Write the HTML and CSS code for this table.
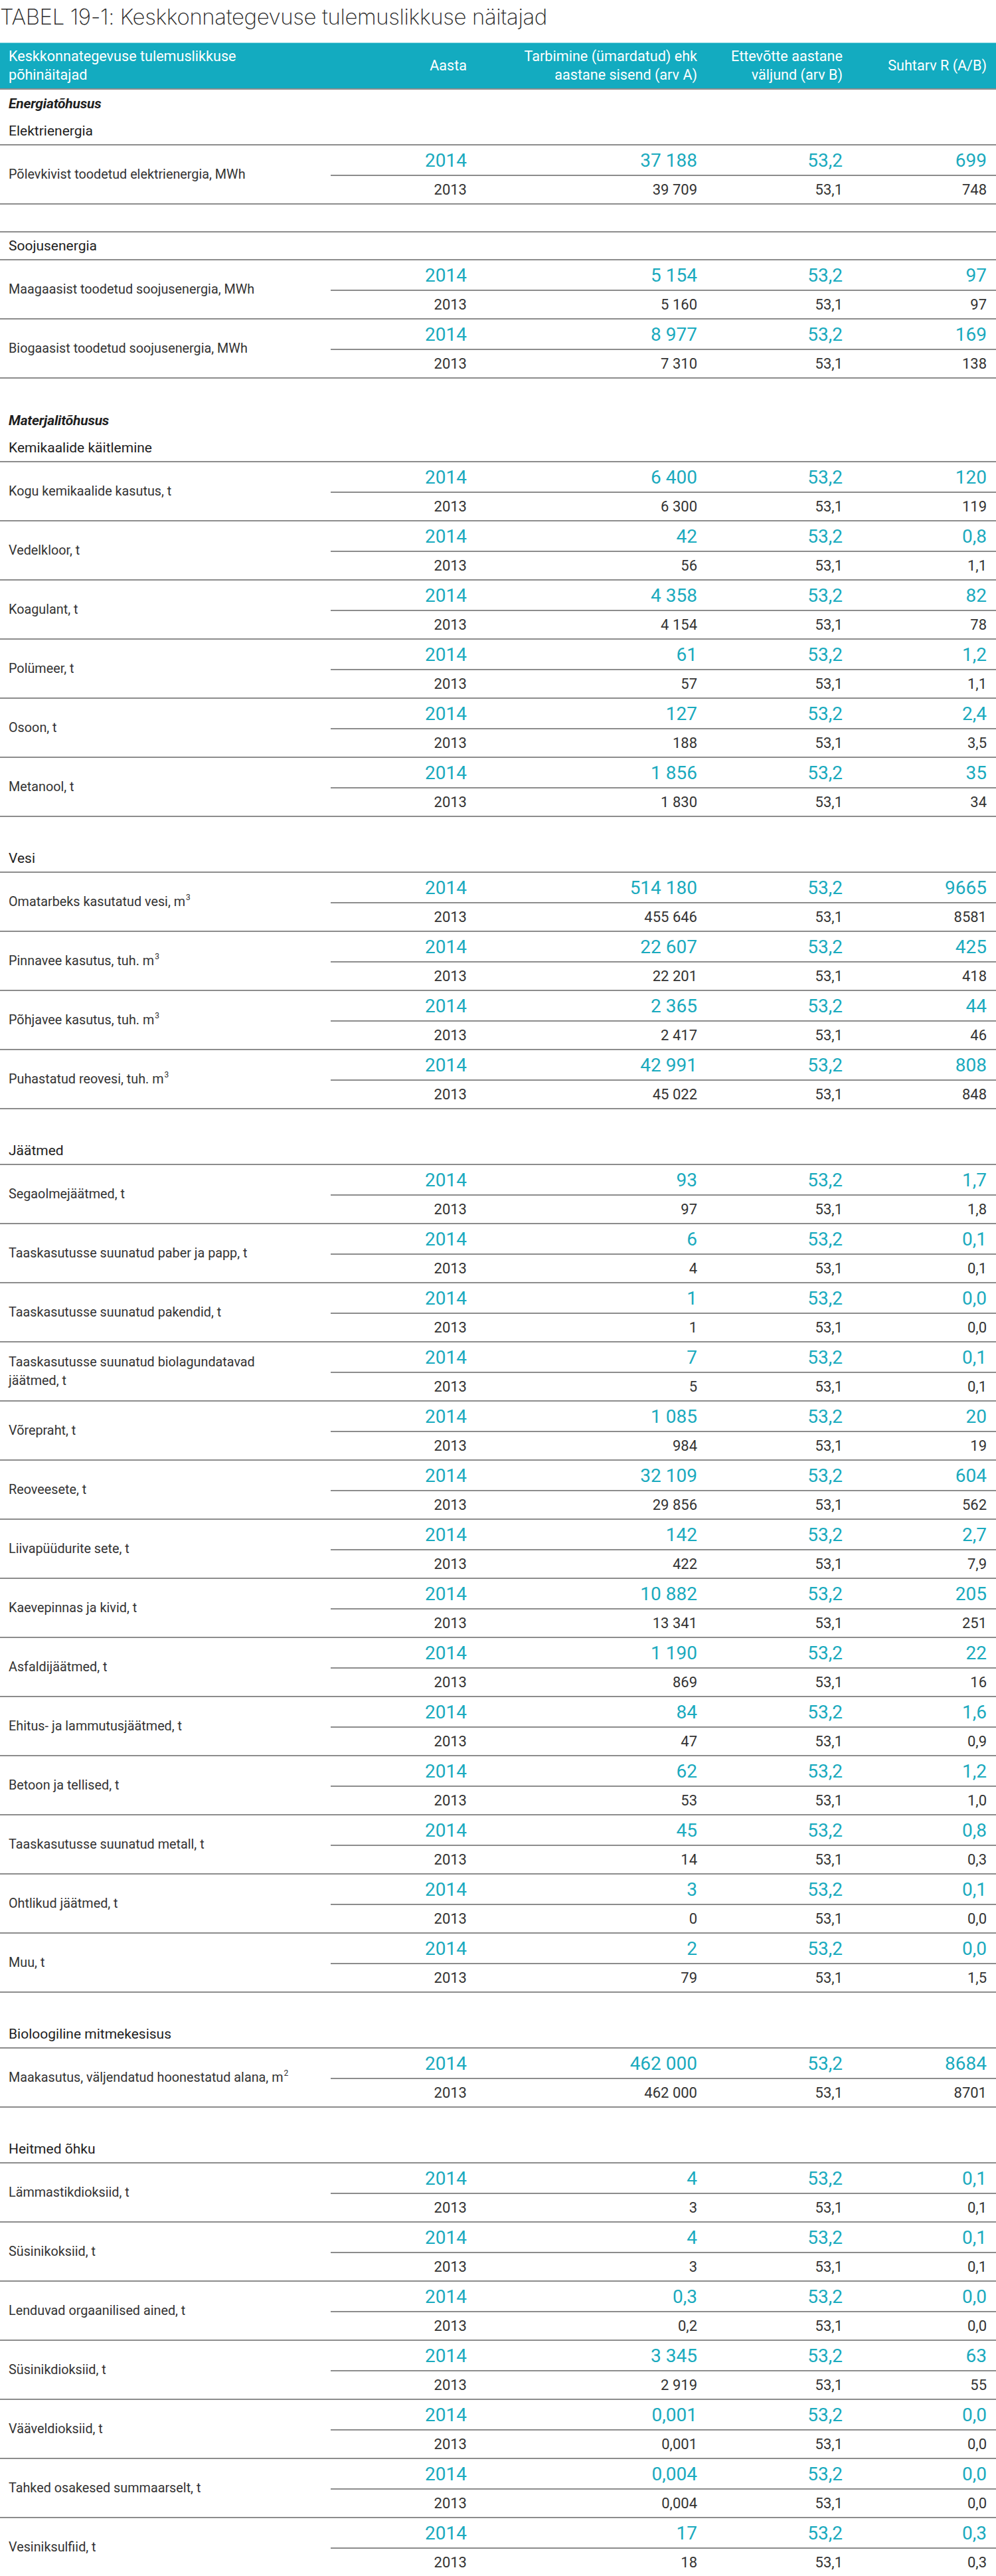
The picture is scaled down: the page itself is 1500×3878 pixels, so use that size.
FILE: index.html
```html
<!DOCTYPE html>
<html lang="et">
<head>
<meta charset="utf-8">
<title>TABEL 19-1</title>
<link rel="stylesheet" href="styles.css">
</head>
<body>
<h1 class="title">TABEL 19-1: Keskkonnategevuse tulemuslikkuse näitajad</h1>
<div class="table">
  <div class="thead">
    <div class="h1">Keskkonnategevuse tulemuslikkuse<br>põhinäitajad</div>
    <div class="hy">Aasta</div>
    <div>Tarbimine (ümardatud) ehk<br>aastane sisend (arv A)</div>
    <div>Ettevõtte aastane<br>väljund (arv B)</div>
    <div class="hl">Suhtarv R (A/B)</div>
  </div>

  <div class="row sec">Energiatõhusus</div>
  <div class="row line">Elektrienergia</div>
  <div class="ind">
    <div class="lbl">Põlevkivist toodetud elektrienergia, MWh</div>
    <div class="n y">2014</div><div class="n">37 188</div><div class="n">53,2</div><div class="n l">699</div>
    <div class="o y">2013</div><div class="o">39 709</div><div class="o">53,1</div><div class="o l">748</div>
  </div>
  <div class="row line"></div>
  <div class="row line">Soojusenergia</div>
  <div class="ind">
    <div class="lbl">Maagaasist toodetud soojusenergia, MWh</div>
    <div class="n y">2014</div><div class="n">5 154</div><div class="n">53,2</div><div class="n l">97</div>
    <div class="o y">2013</div><div class="o">5 160</div><div class="o">53,1</div><div class="o l">97</div>
  </div>
  <div class="ind">
    <div class="lbl">Biogaasist toodetud soojusenergia, MWh</div>
    <div class="n y">2014</div><div class="n">8 977</div><div class="n">53,2</div><div class="n l">169</div>
    <div class="o y">2013</div><div class="o">7 310</div><div class="o">53,1</div><div class="o l">138</div>
  </div>
  <div class="row"></div>

  <div class="row sec">Materjalitõhusus</div>
  <div class="row line">Kemikaalide käitlemine</div>
  <div class="ind">
    <div class="lbl">Kogu kemikaalide kasutus, t</div>
    <div class="n y">2014</div><div class="n">6 400</div><div class="n">53,2</div><div class="n l">120</div>
    <div class="o y">2013</div><div class="o">6 300</div><div class="o">53,1</div><div class="o l">119</div>
  </div>
  <div class="ind">
    <div class="lbl">Vedelkloor, t</div>
    <div class="n y">2014</div><div class="n">42</div><div class="n">53,2</div><div class="n l">0,8</div>
    <div class="o y">2013</div><div class="o">56</div><div class="o">53,1</div><div class="o l">1,1</div>
  </div>
  <div class="ind">
    <div class="lbl">Koagulant, t</div>
    <div class="n y">2014</div><div class="n">4 358</div><div class="n">53,2</div><div class="n l">82</div>
    <div class="o y">2013</div><div class="o">4 154</div><div class="o">53,1</div><div class="o l">78</div>
  </div>
  <div class="ind">
    <div class="lbl">Polümeer, t</div>
    <div class="n y">2014</div><div class="n">61</div><div class="n">53,2</div><div class="n l">1,2</div>
    <div class="o y">2013</div><div class="o">57</div><div class="o">53,1</div><div class="o l">1,1</div>
  </div>
  <div class="ind">
    <div class="lbl">Osoon, t</div>
    <div class="n y">2014</div><div class="n">127</div><div class="n">53,2</div><div class="n l">2,4</div>
    <div class="o y">2013</div><div class="o">188</div><div class="o">53,1</div><div class="o l">3,5</div>
  </div>
  <div class="ind">
    <div class="lbl">Metanool, t</div>
    <div class="n y">2014</div><div class="n">1 856</div><div class="n">53,2</div><div class="n l">35</div>
    <div class="o y">2013</div><div class="o">1 830</div><div class="o">53,1</div><div class="o l">34</div>
  </div>
  <div class="row"></div>

  <div class="row line">Vesi</div>
  <div class="ind">
    <div class="lbl"><span>Omatarbeks kasutatud vesi, m<sup>3</sup></span></div>
    <div class="n y">2014</div><div class="n">514 180</div><div class="n">53,2</div><div class="n l">9665</div>
    <div class="o y">2013</div><div class="o">455 646</div><div class="o">53,1</div><div class="o l">8581</div>
  </div>
  <div class="ind">
    <div class="lbl"><span>Pinnavee kasutus, tuh. m<sup>3</sup></span></div>
    <div class="n y">2014</div><div class="n">22 607</div><div class="n">53,2</div><div class="n l">425</div>
    <div class="o y">2013</div><div class="o">22 201</div><div class="o">53,1</div><div class="o l">418</div>
  </div>
  <div class="ind">
    <div class="lbl"><span>Põhjavee kasutus, tuh. m<sup>3</sup></span></div>
    <div class="n y">2014</div><div class="n">2 365</div><div class="n">53,2</div><div class="n l">44</div>
    <div class="o y">2013</div><div class="o">2 417</div><div class="o">53,1</div><div class="o l">46</div>
  </div>
  <div class="ind">
    <div class="lbl"><span>Puhastatud reovesi, tuh. m<sup>3</sup></span></div>
    <div class="n y">2014</div><div class="n">42 991</div><div class="n">53,2</div><div class="n l">808</div>
    <div class="o y">2013</div><div class="o">45 022</div><div class="o">53,1</div><div class="o l">848</div>
  </div>
  <div class="row"></div>

  <div class="row line">Jäätmed</div>
  <div class="ind">
    <div class="lbl">Segaolmejäätmed, t</div>
    <div class="n y">2014</div><div class="n">93</div><div class="n">53,2</div><div class="n l">1,7</div>
    <div class="o y">2013</div><div class="o">97</div><div class="o">53,1</div><div class="o l">1,8</div>
  </div>
  <div class="ind">
    <div class="lbl">Taaskasutusse suunatud paber ja papp, t</div>
    <div class="n y">2014</div><div class="n">6</div><div class="n">53,2</div><div class="n l">0,1</div>
    <div class="o y">2013</div><div class="o">4</div><div class="o">53,1</div><div class="o l">0,1</div>
  </div>
  <div class="ind">
    <div class="lbl">Taaskasutusse suunatud pakendid, t</div>
    <div class="n y">2014</div><div class="n">1</div><div class="n">53,2</div><div class="n l">0,0</div>
    <div class="o y">2013</div><div class="o">1</div><div class="o">53,1</div><div class="o l">0,0</div>
  </div>
  <div class="ind">
    <div class="lbl"><span>Taaskasutusse suunatud biolagundatavad<br>jäätmed, t</span></div>
    <div class="n y">2014</div><div class="n">7</div><div class="n">53,2</div><div class="n l">0,1</div>
    <div class="o y">2013</div><div class="o">5</div><div class="o">53,1</div><div class="o l">0,1</div>
  </div>
  <div class="ind">
    <div class="lbl">Võrepraht, t</div>
    <div class="n y">2014</div><div class="n">1 085</div><div class="n">53,2</div><div class="n l">20</div>
    <div class="o y">2013</div><div class="o">984</div><div class="o">53,1</div><div class="o l">19</div>
  </div>
  <div class="ind">
    <div class="lbl">Reoveesete, t</div>
    <div class="n y">2014</div><div class="n">32 109</div><div class="n">53,2</div><div class="n l">604</div>
    <div class="o y">2013</div><div class="o">29 856</div><div class="o">53,1</div><div class="o l">562</div>
  </div>
  <div class="ind">
    <div class="lbl">Liivapüüdurite sete, t</div>
    <div class="n y">2014</div><div class="n">142</div><div class="n">53,2</div><div class="n l">2,7</div>
    <div class="o y">2013</div><div class="o">422</div><div class="o">53,1</div><div class="o l">7,9</div>
  </div>
  <div class="ind">
    <div class="lbl">Kaevepinnas ja kivid, t</div>
    <div class="n y">2014</div><div class="n">10 882</div><div class="n">53,2</div><div class="n l">205</div>
    <div class="o y">2013</div><div class="o">13 341</div><div class="o">53,1</div><div class="o l">251</div>
  </div>
  <div class="ind">
    <div class="lbl">Asfaldijäätmed, t</div>
    <div class="n y">2014</div><div class="n">1 190</div><div class="n">53,2</div><div class="n l">22</div>
    <div class="o y">2013</div><div class="o">869</div><div class="o">53,1</div><div class="o l">16</div>
  </div>
  <div class="ind">
    <div class="lbl">Ehitus- ja lammutusjäätmed, t</div>
    <div class="n y">2014</div><div class="n">84</div><div class="n">53,2</div><div class="n l">1,6</div>
    <div class="o y">2013</div><div class="o">47</div><div class="o">53,1</div><div class="o l">0,9</div>
  </div>
  <div class="ind">
    <div class="lbl">Betoon ja tellised, t</div>
    <div class="n y">2014</div><div class="n">62</div><div class="n">53,2</div><div class="n l">1,2</div>
    <div class="o y">2013</div><div class="o">53</div><div class="o">53,1</div><div class="o l">1,0</div>
  </div>
  <div class="ind">
    <div class="lbl">Taaskasutusse suunatud metall, t</div>
    <div class="n y">2014</div><div class="n">45</div><div class="n">53,2</div><div class="n l">0,8</div>
    <div class="o y">2013</div><div class="o">14</div><div class="o">53,1</div><div class="o l">0,3</div>
  </div>
  <div class="ind">
    <div class="lbl">Ohtlikud jäätmed, t</div>
    <div class="n y">2014</div><div class="n">3</div><div class="n">53,2</div><div class="n l">0,1</div>
    <div class="o y">2013</div><div class="o">0</div><div class="o">53,1</div><div class="o l">0,0</div>
  </div>
  <div class="ind">
    <div class="lbl">Muu, t</div>
    <div class="n y">2014</div><div class="n">2</div><div class="n">53,2</div><div class="n l">0,0</div>
    <div class="o y">2013</div><div class="o">79</div><div class="o">53,1</div><div class="o l">1,5</div>
  </div>
  <div class="row"></div>

  <div class="row line">Bioloogiline mitmekesisus</div>
  <div class="ind">
    <div class="lbl"><span>Maakasutus, väljendatud hoonestatud alana, m<sup>2</sup></span></div>
    <div class="n y">2014</div><div class="n">462 000</div><div class="n">53,2</div><div class="n l">8684</div>
    <div class="o y">2013</div><div class="o">462 000</div><div class="o">53,1</div><div class="o l">8701</div>
  </div>
  <div class="row"></div>

  <div class="row line">Heitmed õhku</div>
  <div class="ind">
    <div class="lbl">Lämmastikdioksiid, t</div>
    <div class="n y">2014</div><div class="n">4</div><div class="n">53,2</div><div class="n l">0,1</div>
    <div class="o y">2013</div><div class="o">3</div><div class="o">53,1</div><div class="o l">0,1</div>
  </div>
  <div class="ind">
    <div class="lbl">Süsinikoksiid, t</div>
    <div class="n y">2014</div><div class="n">4</div><div class="n">53,2</div><div class="n l">0,1</div>
    <div class="o y">2013</div><div class="o">3</div><div class="o">53,1</div><div class="o l">0,1</div>
  </div>
  <div class="ind">
    <div class="lbl">Lenduvad orgaanilised ained, t</div>
    <div class="n y">2014</div><div class="n">0,3</div><div class="n">53,2</div><div class="n l">0,0</div>
    <div class="o y">2013</div><div class="o">0,2</div><div class="o">53,1</div><div class="o l">0,0</div>
  </div>
  <div class="ind">
    <div class="lbl">Süsinikdioksiid, t</div>
    <div class="n y">2014</div><div class="n">3 345</div><div class="n">53,2</div><div class="n l">63</div>
    <div class="o y">2013</div><div class="o">2 919</div><div class="o">53,1</div><div class="o l">55</div>
  </div>
  <div class="ind">
    <div class="lbl">Vääveldioksiid, t</div>
    <div class="n y">2014</div><div class="n">0,001</div><div class="n">53,2</div><div class="n l">0,0</div>
    <div class="o y">2013</div><div class="o">0,001</div><div class="o">53,1</div><div class="o l">0,0</div>
  </div>
  <div class="ind">
    <div class="lbl">Tahked osakesed summaarselt, t</div>
    <div class="n y">2014</div><div class="n">0,004</div><div class="n">53,2</div><div class="n l">0,0</div>
    <div class="o y">2013</div><div class="o">0,004</div><div class="o">53,1</div><div class="o l">0,0</div>
  </div>
  <div class="ind">
    <div class="lbl">Vesiniksulfiid, t</div>
    <div class="n y">2014</div><div class="n">17</div><div class="n">53,2</div><div class="n l">0,3</div>
    <div class="o y">2013</div><div class="o">18</div><div class="o">53,1</div><div class="o l">0,3</div>
  </div>
</div>
</body>
</html>
```

FILE: styles.css
```css
html, body {
  margin: 0;
  padding: 0;
  background: #ffffff;
}

body {
  font-family: Roboto, "Liberation Sans", Arial, sans-serif;
  color: #2e2e2e;
  width: 1500px;
}

.title {
  margin: 0;
  height: 64px;
  line-height: 50px;
  font-family: Inter, Lato, "Open Sans", sans-serif;
  font-weight: 200;
  font-size: 33px;
  color: #2a2a2a;
  white-space: nowrap;
  letter-spacing: -0.4px;
}

.table {
  width: 1500px;
}

.thead {
  display: grid;
  grid-template-columns: 498px 219px 346px 219px 218px;
  height: 71px;
  box-sizing: border-box;
  background: #13abc0;
  border-top: 1px solid #7fd3de;
  border-bottom: 2px solid #8c8c8c;
  color: #ffffff;
  font-size: 21.6px;
  line-height: 28px;
}

.thead div {
  display: flex;
  align-items: center;
  justify-content: flex-end;
  text-align: right;
  padding-right: 13px;
  white-space: nowrap;
}

.thead .h1 {
  justify-content: flex-start;
  text-align: left;
  padding-left: 13px;
  padding-right: 0;
}

.thead .hy,
.thead .hl {
  padding-right: 14px;
}

.row {
  height: 42px;
  box-sizing: border-box;
  display: flex;
  align-items: center;
  padding-left: 13px;
  font-size: 21px;
  color: #1e1e1e;
}

.sec {
  font-weight: 700;
  font-style: italic;
  letter-spacing: -0.2px;
}

.line {
  border-bottom: 2px solid #8c8c8c;
}

.ind {
  display: grid;
  grid-template-columns: 498px 219px 346px 219px 218px;
  grid-template-rows: 46px 41px;
  border-bottom: 2px solid #8c8c8c;
}

.lbl {
  grid-row: span 2;
  display: flex;
  align-items: center;
  padding-left: 13px;
  font-size: 19.8px;
  line-height: 28px;
  color: #333333;
}

.lbl sup {
  font-size: 12px;
  line-height: 0;
  vertical-align: 9px;
  margin-left: 1px;
}

.n,
.o {
  display: flex;
  align-items: center;
  justify-content: flex-end;
  padding-right: 13px;
  white-space: nowrap;
}

.y,
.l {
  padding-right: 14px;
}

.n {
  box-sizing: border-box;
  border-bottom: 2px solid #8c8c8c;
  font-size: 28px;
  color: #1aaabe;
}

.o {
  font-size: 22px;
  color: #333333;
}
```
